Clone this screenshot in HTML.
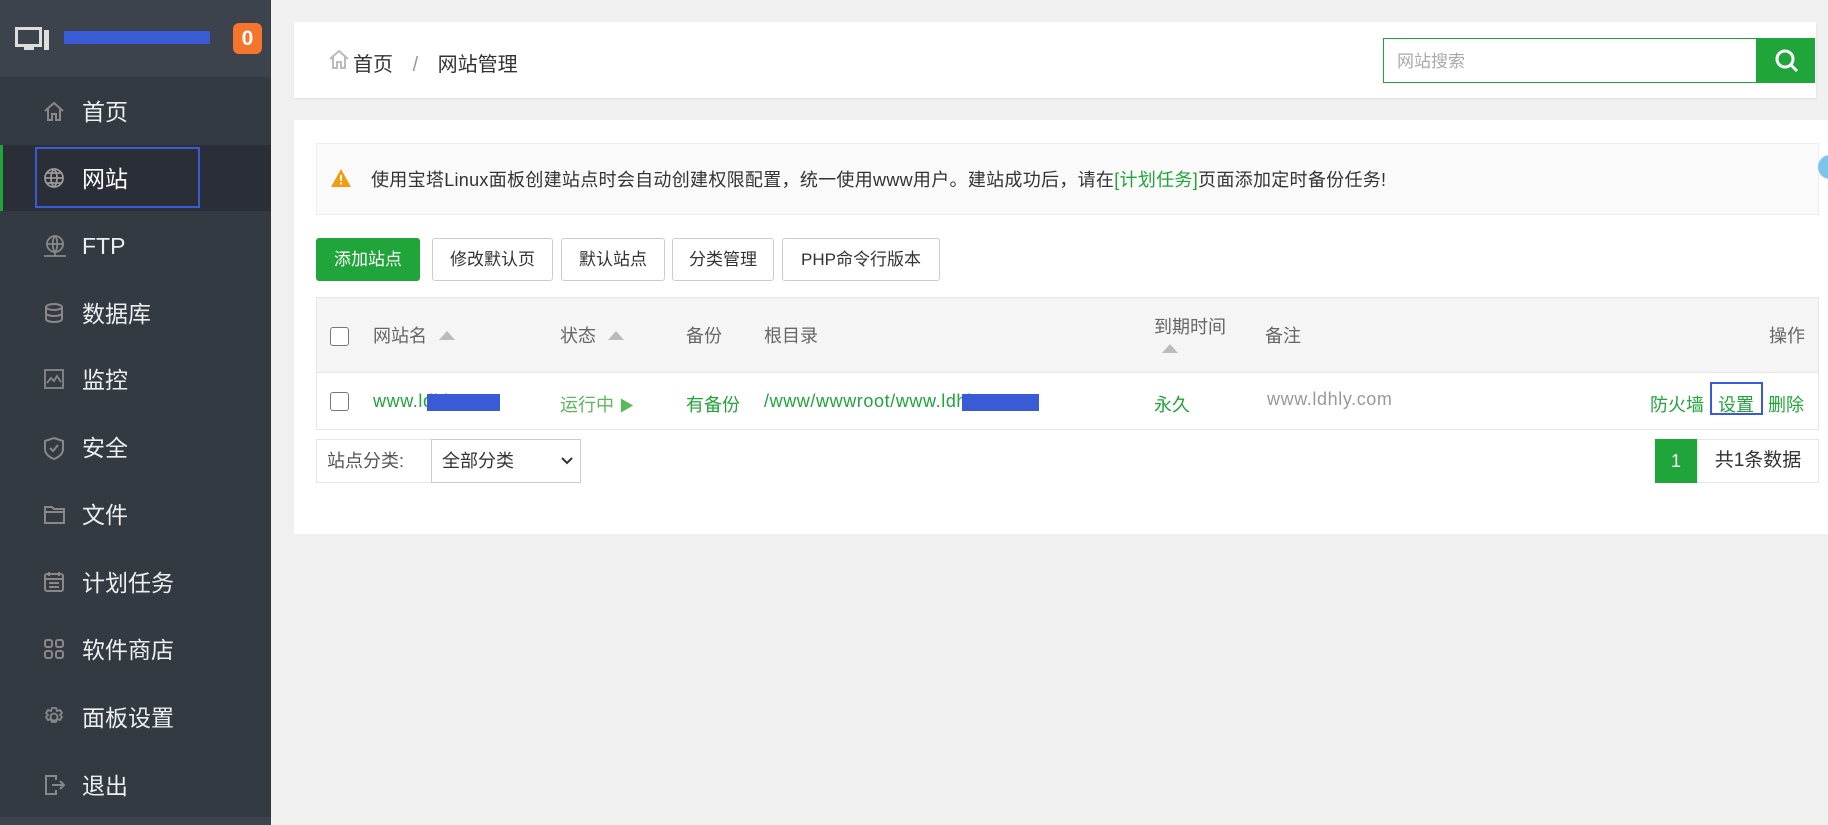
<!DOCTYPE html>
<html><head><meta charset="utf-8"><style>
*{margin:0;padding:0;box-sizing:border-box}
body{width:1828px;height:825px;background:#f0f0f0;font-family:"Liberation Sans","Noto Sans CJK SC",sans-serif;position:relative;overflow:hidden}
.a{position:absolute}
#side{left:0;top:0;width:271px;height:825px;background:#333a42}
#shead{left:0;top:0;width:271px;height:77px;background:#3c434c}
.mi{position:absolute;left:0;width:271px;height:68px;color:#eceef0;font-size:23px;line-height:68px;padding-left:82px}
.mi svg{position:absolute;left:43px;top:22px}
.card{background:#fff}
.btn{position:absolute;top:238px;height:43px;border:1px solid #ccc;border-radius:3px;background:#fff;color:#333;font-size:17px;line-height:41px;text-align:center}
.th{position:absolute;top:322px;font-size:18px;color:#666}
.tri{display:inline-block;width:0;height:0;border-left:8px solid transparent;border-right:8px solid transparent;border-bottom:9px solid #bbb;margin-left:12px;vertical-align:2px}
.td{position:absolute;top:391px;font-size:18px;color:#20a53a}
.lt{letter-spacing:.6px}
.cb{position:absolute;left:330px;width:19px;height:19px;border:1px solid #777;border-radius:3px;background:#fff}
</style></head><body>
<div id="side" class="a"></div>
<div id="shead" class="a"></div>
<svg class="a" style="left:15px;top:27px" width="35" height="26" viewBox="0 0 35 26"><rect x="1.5" y="1.5" width="24" height="17" fill="none" stroke="#ddd" stroke-width="3"/><rect x="9" y="20" width="10" height="3" fill="#ddd"/><rect x="29" y="3" width="5" height="20" fill="#ddd"/></svg>
<div class="a" style="left:64px;top:31px;width:146px;height:13px;background:#3a5bd6"></div>
<div class="a" style="left:233px;top:23px;width:29px;height:31px;background:#f5752d;border-radius:6px;color:#fff;font-weight:bold;font-size:21px;text-align:center;line-height:31px">0</div>
<div class="a" style="left:0;top:145px;width:271px;height:66px;background:#2a2e36;border-left:3px solid #20a53a"></div>
<div class="mi" style="top:78px"><svg width="22" height="22" viewBox="0 0 22 22" fill="none" stroke="#888" stroke-width="2"><path d="M2 11L11 3l9 8M5 9v11h4v-6h4v6h4V9"/></svg>首页</div>
<div class="mi" style="top:145px;color:#fff"><svg width="22" height="22" viewBox="0 0 22 22" fill="none" stroke="#999" stroke-width="1.8"><circle cx="11" cy="11" r="9"/><path d="M2 11h18M11 2c-4 4-4 14 0 18M11 2c4 4 4 14 0 18M4 6h14M4 16h14"/></svg>网站</div>
<div class="mi" style="top:212px"><svg width="24" height="24" viewBox="0 0 24 24" fill="none" stroke="#888" stroke-width="1.8"><circle cx="12" cy="10" r="8"/><path d="M4 10h16M12 2c-3 3-3 13 0 16M12 2c3 3 3 13 0 16M1 22h22M12 18v4"/></svg>FTP</div>
<div class="mi" style="top:280px"><svg width="22" height="22" viewBox="0 0 22 22" fill="none" stroke="#888" stroke-width="2"><ellipse cx="11" cy="5" rx="8" ry="3"/><path d="M3 5v12c0 2 4 3 8 3s8-1 8-3V5M3 11c0 2 4 3 8 3s8-1 8-3"/></svg>数据库</div>
<div class="mi" style="top:346px"><svg width="22" height="22" viewBox="0 0 22 22" fill="none" stroke="#888" stroke-width="1.8"><rect x="2" y="2" width="18" height="18"/><path d="M4 15l4-5 3 3 3-5 4 6"/></svg>监控</div>
<div class="mi" style="top:414px"><svg width="22" height="24" viewBox="0 0 22 24" fill="none" stroke="#888" stroke-width="2"><path d="M11 2l9 3v8c0 5-4 8-9 10-5-2-9-5-9-10V5z"/><path d="M7 12l3 3 5-6"/></svg>安全</div>
<div class="mi" style="top:481px"><svg width="24" height="22" viewBox="0 0 24 22" fill="none" stroke="#888" stroke-width="2"><path d="M2 4h7l2 2h10v14H2zM2 9h20"/></svg>文件</div>
<div class="mi" style="top:549px"><svg width="22" height="22" viewBox="0 0 22 22" fill="none" stroke="#888" stroke-width="2"><rect x="2" y="3" width="18" height="17" rx="2"/><path d="M2 8h18M6 1v4M16 1v4M6 12h10M6 16h10"/></svg>计划任务</div>
<div class="mi" style="top:616px"><svg width="22" height="22" viewBox="0 0 22 22" fill="none" stroke="#888" stroke-width="2"><rect x="2" y="2" width="7" height="7" rx="2"/><rect x="13" y="2" width="7" height="7" rx="2"/><rect x="2" y="13" width="7" height="7" rx="2"/><rect x="13" y="13" width="7" height="7" rx="2"/></svg>软件商店</div>
<div class="mi" style="top:684px"><svg width="22" height="22" viewBox="0 0 22 22" fill="none" stroke="#888" stroke-width="1.8"><circle cx="11" cy="11" r="3.5"/><path d="M9 2h4l1 3 3-1 2 3-2 2 2 2-2 3-3-1-1 3H9l-1-3-3 1-2-3 2-2-2-2 2-3 3 1z"/></svg>面板设置</div>
<div class="mi" style="top:752px"><svg width="22" height="22" viewBox="0 0 22 22" fill="none" stroke="#888" stroke-width="2"><path d="M13 6V2H3v18h10v-4M9 11h12M17 7l4 4-4 4"/></svg>退出</div>
<div class="a" style="left:0;top:817px;width:271px;height:8px;background:#3c434c"></div>
<div class="a" style="left:35px;top:147px;width:165px;height:61px;border:2px solid #3a5bd6"></div>

<div class="a card" style="left:294px;top:22px;width:1522px;height:76px;box-shadow:0 1px 2px rgba(0,0,0,.08)"></div>
<svg class="a" style="left:328px;top:48px" width="22" height="22" viewBox="0 0 22 22" fill="none" stroke="#bbb" stroke-width="2"><path d="M2 11L11 3l9 8M5 9v11h4v-6h4v6h4V9"/></svg>
<div class="a" style="left:353px;top:48px;font-size:20px;color:#333">首页 <span style="color:#999;margin:0 14px">/</span> 网站管理</div>
<div class="a" style="left:1383px;top:38px;width:374px;height:45px;border:1px solid #20a53a;background:#fff;color:#aaa;font-size:17px;line-height:45px;padding-left:13px">网站搜索</div>
<div class="a" style="left:1757px;top:38px;width:58px;height:45px;background:#20a53a"></div>
<svg class="a" style="left:1774px;top:48px" width="26" height="26" viewBox="0 0 26 26" fill="none" stroke="#fff" stroke-width="3"><circle cx="11" cy="11" r="8"/><path d="M17 17l6 6"/></svg>

<div class="a card" style="left:294px;top:120px;width:1534px;height:414px"></div>
<div class="a" style="left:316px;top:143px;width:1503px;height:72px;background:#fafafa;border:1px solid #eee"></div>
<svg class="a" style="left:330px;top:168px" width="22" height="20" viewBox="0 0 22 20"><path d="M11 1L21 19H1z" fill="#f39c12"/><rect x="10" y="7" width="2" height="6" fill="#fff"/><rect x="10" y="14.5" width="2" height="2" fill="#fff"/></svg>
<div class="a" style="left:371px;top:166px;font-size:18px;color:#333;letter-spacing:.3px;white-space:nowrap">使用宝塔Linux面板创建站点时会自动创建权限配置，统一使用www用户。建站成功后，请在<span style="color:#20a53a">[计划任务]</span>页面添加定时备份任务!</div>
<div class="a" style="left:1818px;top:155px;width:24px;height:24px;border-radius:50%;background:#7ec3ea"></div>

<div class="btn" style="left:316px;width:104px;background:#20a53a;border-color:#20a53a;color:#fff">添加站点</div>
<div class="btn" style="left:432px;width:121px">修改默认页</div>
<div class="btn" style="left:561px;width:104px">默认站点</div>
<div class="btn" style="left:672px;width:102px">分类管理</div>
<div class="btn" style="left:782px;width:158px">PHP命令行版本</div>

<div class="a" style="left:316px;top:297px;width:1503px;height:133px;border:1px solid #e6e6e6"></div>
<div class="a" style="left:317px;top:298px;width:1501px;height:75px;background:#f5f5f5;border-bottom:1px solid #e6e6e6"></div>
<div class="cb" style="top:327px"></div>
<div class="th" style="left:373px">网站名<span class="tri"></span></div>
<div class="th" style="left:560px">状态<span class="tri"></span></div>
<div class="th" style="left:686px">备份</div>
<div class="th" style="left:764px">根目录</div>
<div class="th" style="left:1154px;top:313px">到期时间<br><span class="tri" style="margin-left:8px"></span></div>
<div class="th" style="left:1265px">备注</div>
<div class="th" style="left:1769px">操作</div>

<div class="cb" style="top:392px"></div>
<div class="td lt" style="left:373px">www.ldhly.com</div>
<div class="a" style="left:427px;top:394px;width:73px;height:17px;background:#3a5bd6"></div>
<div class="td" style="left:560px;color:#5cb85c">运行中 <span style="font-size:15px">▶</span></div>
<div class="td" style="left:686px">有备份</div>
<div class="td lt" style="left:764px">/www/wwwroot/www.ldhly.com</div>
<div class="a" style="left:962px;top:394px;width:77px;height:17px;background:#3a5bd6"></div>
<div class="td" style="left:1154px">永久</div>
<div class="td lt" style="left:1267px;color:#999;top:389px">www.ldhly.com</div>
<div class="td" style="left:1650px">防火墙 <span style="color:#ccc">|</span></div>
<div class="td" style="left:1718px">设置</div>
<div class="td" style="left:1768px">删除</div>
<div class="a" style="left:1710px;top:382px;width:53px;height:33px;border:2px solid #3a5bd6"></div>

<div class="a" style="left:316px;top:439px;width:116px;height:44px;border:1px solid #e6e6e6;background:#fff;color:#555;font-size:18px;line-height:42px;padding-left:10px">站点分类:</div>
<div class="a" style="left:431px;top:439px;width:150px;height:44px;border:1px solid #ccc;background:#fff;color:#333;font-size:18px;line-height:42px;padding-left:10px">全部分类</div>
<svg class="a" style="left:560px;top:456px" width="14" height="10" viewBox="0 0 14 10" fill="none" stroke="#333" stroke-width="2"><path d="M2 2l5 5 5-5"/></svg>
<div class="a" style="left:1655px;top:439px;width:42px;height:44px;background:#20a53a;color:#fff;font-size:18px;line-height:44px;text-align:center">1</div>
<div class="a" style="left:1697px;top:439px;width:122px;height:44px;border:1px solid #e6e6e6;background:#fff;color:#333;font-size:19px;line-height:42px;text-align:center">共1条数据</div>
</body></html>
